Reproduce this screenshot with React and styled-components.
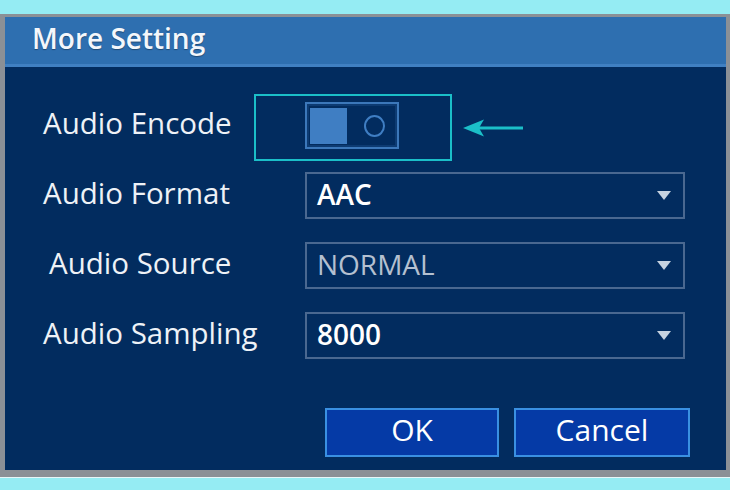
import React from "react"
import styled, { createGlobalStyle } from "styled-components"

const GlobalStyle = createGlobalStyle`
  html, body {
    margin: 0;
    padding: 0;
    background: #95ecf3;
    font-family: "Open Sans", "Noto Sans", "Liberation Sans", sans-serif;
  }
`;

const Page = styled.div`
  width: 730px;
  height: 490px;
  padding-top: 14px;
  box-sizing: border-box;
`;

const Dialog = styled.div`
  position: relative;
  height: 463px;
  box-sizing: border-box;
  border-style: solid;
  border-color: #8b9096;
  border-width: 3px 4px 7px 5px;
  background: #022c5f;
  display: flex;
  flex-direction: column;
  box-shadow: 0 1px 0 #e8f6f8;
`;

const TitleBar = styled.div`
  flex: none;
  height: 42px;
  background: #2e6fb0;
  border-bottom: 3px solid #4080c2;
  display: flex;
  align-items: center;
  padding: 0 0 5px 27px;
  color: #f4f7fb;
  font-size: 28px;
  font-weight: 600;
  line-height: 1;
  text-shadow: 0 1px 1px rgba(0, 0, 0, 0.35);
`;

const Body = styled.div`
  flex: 1;
  padding: 35px 0 0 38px;
  display: flex;
  flex-direction: column;
`;

const Form = styled.div`
  display: grid;
  grid-template-columns: 262px 380px;
  grid-auto-rows: 47px;
  row-gap: 23px;
  align-items: center;
`;

const Label = styled.div`
  color: #eef2f7;
  font-size: 29.5px;
  font-weight: 500;
  line-height: 1;
  padding-left: ${p => p.$indent || 0}px;
  padding-bottom: 5px;
  white-space: nowrap;
`;

const Toggle = styled.div`
  width: 94px;
  height: 47px;
  box-sizing: border-box;
  border: 2px solid #3c78ba;
  box-shadow: inset 0 0 0 2px #0d3b72;
  display: flex;
  align-items: center;
  padding: 0 0 0 3px;
  gap: 17px;
`;

const Knob = styled.div`
  width: 37px;
  height: 36px;
  background: #3f7ec3;
`;

const OffMark = styled.div`
  width: 17px;
  height: 18px;
  border: 2px solid #3f7ec3;
  border-radius: 50%;
`;

const Select = styled.div`
  height: 47px;
  box-sizing: border-box;
  border: 2px solid #4a6890;
  display: flex;
  align-items: center;
  justify-content: space-between;
  padding: 0 12px 3px 10px;
  color: ${p => (p.$disabled ? "#b4c0d0" : "#ffffff")};
  font-size: 28px;
  line-height: 1;
  font-weight: ${p => (p.$disabled ? 500 : 600)};
`;

const Caret = styled.span`
  width: 0;
  height: 0;
  margin-top: 3px;
  border-left: 7px solid transparent;
  border-right: 7px solid transparent;
  border-top: 9px solid #c6d2e0;
`;

const Buttons = styled.div`
  margin-top: 49px;
  display: flex;
  gap: 15px;
  padding-left: 282px;
`;

const Button = styled.div`
  width: ${p => p.$w}px;
  height: 49px;
  box-sizing: border-box;
  background: #053aa6;
  border: 2px solid #3a90e2;
  color: #ffffff;
  font-size: 30px;
  font-weight: 500;
  line-height: 1;
  padding-bottom: 6px;
  display: flex;
  align-items: center;
  justify-content: center;
`;

const Highlight = styled.div`
  position: absolute;
  left: 249px;
  top: 77px;
  width: 198px;
  height: 67px;
  box-sizing: border-box;
  border: 2px solid #1bbfc8;
`;

const Pointer = styled.svg`
  position: absolute;
  left: 456px;
  top: 101px;
`;

function Dropdown({ value, disabled }) {
  return (
    <Select $disabled={disabled}>
      <span>{value}</span>
      <Caret />
    </Select>
  )
}

export default function App() {
  return (
    <Page>
      <GlobalStyle />
      <Dialog>
        <TitleBar>More Setting</TitleBar>
        <Body>
          <Form>
            <Label>Audio Encode</Label>
            <Toggle>
              <Knob />
              <OffMark />
            </Toggle>

            <Label>Audio Format</Label>
            <Dropdown value="AAC" />

            <Label $indent={6}>Audio Source</Label>
            <Dropdown value="NORMAL" disabled />

            <Label>Audio Sampling</Label>
            <Dropdown value="8000" />
          </Form>

          <Buttons>
            <Button $w={174}>OK</Button>
            <Button $w={176}>Cancel</Button>
          </Buttons>
        </Body>

        <Highlight />
        <Pointer width="64" height="20" viewBox="0 0 64 20">
          <line x1="14" y1="10" x2="62" y2="10" stroke="#1bbfc8" strokeWidth="3" />
          <path d="M2 10 L23 1.5 L18 10 L23 18.5 Z" fill="#1bbfc8" />
        </Pointer>
      </Dialog>
    </Page>
  )
}
